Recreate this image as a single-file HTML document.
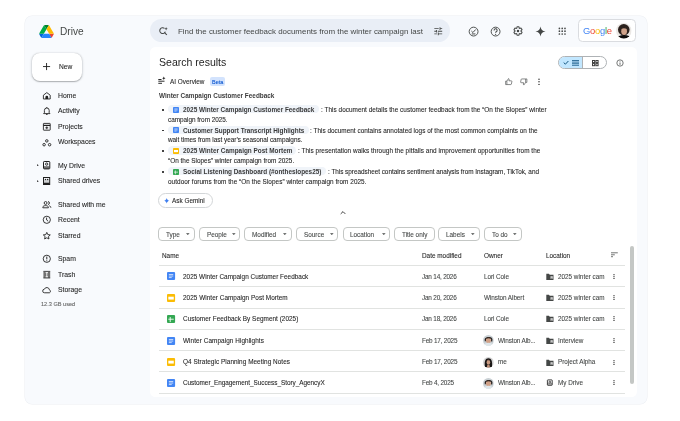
<!DOCTYPE html>
<html><head><meta charset="utf-8">
<style>
*{margin:0;padding:0;box-sizing:border-box}
html,body{-webkit-font-smoothing:antialiased;width:680px;height:421px;background:#fff;overflow:hidden;position:relative;font-family:"Liberation Sans",sans-serif;color:#1f1f1f}
.a{position:absolute}
.t{position:absolute;white-space:nowrap;will-change:transform;font-family:"Liberation Sans",sans-serif}
svg{position:absolute;overflow:visible}
#frame{left:25.2px;top:15.6px;width:622.2px;height:388.8px;background:#f8fafd;border-radius:7px;box-shadow:0 0 0 .5px #eceef2}
#search{left:149.7px;top:19.4px;width:300.3px;height:23px;background:#e9eef6;border-radius:12px}
#acct{left:577.5px;top:19.4px;width:58px;height:23px;background:#fff;border:.7px solid #dadce0;border-radius:4.5px}
#newbtn{left:32.3px;top:52.5px;width:50px;height:28px;background:#fff;border-radius:8px;box-shadow:0 .5px 1px rgba(60,64,67,.3),0 .5px 2px .5px rgba(60,64,67,.15)}
.nav{font-size:6.85px;color:#1f1f1f;line-height:10px;left:58.2px}
#card{left:149.6px;top:46.8px;width:487.6px;height:349.8px;background:#fff;border-radius:5.5px}
.body{font-size:6.4px;line-height:10px;color:#1f1f1f}
.chip{position:absolute;height:14px;top:227.1px;border:.7px solid #c4c7c5;border-radius:4px}
.ctext{font-size:6.4px;line-height:10px;color:#444746}
.div{position:absolute;left:158.5px;width:466.3px;height:.7px;background:#e1e3e1}
</style></head><body>
<div id="frame" class="a"></div>

<!-- Drive logo -->
<svg style="left:39px;top:24.7px" width="15" height="13" viewBox="0 0 87.3 78">
<path d="M6.6 66.85l3.85 6.65c.8 1.4 1.95 2.5 3.3 3.3l13.75-23.8H0c0 1.55.4 3.1 1.2 4.5z" fill="#0066da"/>
<path d="M43.65 25L29.9 1.2c-1.35.8-2.5 1.9-3.3 3.3L1.2 48.5A9.06 9.06 0 000 53h27.5z" fill="#00ac47"/>
<path d="M73.55 76.8c1.35-.8 2.5-1.9 3.3-3.3l1.6-2.75 7.65-13.25c.8-1.4 1.2-2.95 1.2-4.5H59.798l5.852 11.5z" fill="#ea4335"/>
<path d="M43.65 25L57.4 1.2C56.05.4 54.5 0 52.9 0H34.4c-1.6 0-3.15.45-4.5 1.2z" fill="#00832d"/>
<path d="M59.8 53H27.5L13.75 76.8c1.35.8 2.9 1.2 4.5 1.2h50.8c1.6 0 3.15-.45 4.5-1.2z" fill="#2684fc"/>
<path d="M73.4 26.5l-12.7-22c-.8-1.4-1.95-2.5-3.3-3.3L43.65 25 59.8 53h27.45c0-1.55-.4-3.1-1.2-4.5z" fill="#ffba00"/>
</svg>
<div class="t" style="left:59.6px;top:25.8px;font-size:10.1px;line-height:12px;color:#444746">Drive</div>

<!-- search -->
<div id="search" class="a"></div>
<svg style="left:157.5px;top:26px" width="10.5" height="10.5" viewBox="0 0 24 24"><path d="M14.8 5.6A6.6 6.6 0 1 0 16.8 13" fill="none" stroke="#444746" stroke-width="2.3"/><path d="M15 15l5.2 5.2" stroke="#444746" stroke-width="2.5"/><path d="M18.5 2.5l1.1 2.7 2.7 1.1-2.7 1.1-1.1 2.7-1.1-2.7-2.7-1.1 2.7-1.1z" fill="#444746"/></svg>
<div class="t" style="left:177.7px;top:26.5px;font-size:7.94px;line-height:10px;color:#444746">Find the customer feedback documents from the winter campaign last</div>
<svg style="left:433.2px;top:25.8px" width="10.5" height="10.5" viewBox="0 0 24 24"><path d="M3 17v2h6v-2H3zM3 5v2h10V5H3zm10 16v-2h8v-2h-8v-2h-2v6h2zM7 9v2H3v2h4v2h2V9H7zm14 4v-2H11v2h10zm-6-4h2V7h4V5h-4V3h-2v6z" fill="#444746"/></svg>

<!-- top right icons -->
<svg style="left:467.9px;top:25.5px" width="11.2" height="11.2" viewBox="0 0 24 24"><circle cx="12" cy="12" r="9.5" fill="none" stroke="#444746" stroke-width="2"/><path d="M7.3 10.8l3.2 3.2 6.2-6.6" fill="none" stroke="#444746" stroke-width="2.1"/><path d="M8 17h8" stroke="#444746" stroke-width="2.1"/></svg>
<svg style="left:490.1px;top:25.5px" width="11.2" height="11.2" viewBox="0 0 24 24"><circle cx="12" cy="12" r="9.5" fill="none" stroke="#444746" stroke-width="2"/><path d="M8.7 9.4a3.3 3.3 0 1 1 4.7 3c-1 .5-1.4 1.1-1.4 2.3" fill="none" stroke="#444746" stroke-width="2.2"/><circle cx="12" cy="17.8" r="1.35" fill="#444746"/></svg>
<svg style="left:512.8px;top:26.2px" width="10" height="10" viewBox="0 0 24 24"><path d="M19.4 13c.04-.33.06-.66.06-1s-.02-.67-.06-1l2.1-1.65c.2-.15.25-.42.12-.64l-2-3.46c-.12-.22-.39-.3-.61-.22l-2.49 1c-.52-.4-1.08-.73-1.69-.98l-.38-2.65A.49.49 0 0 0 14 2h-4c-.25 0-.46.18-.49.42l-.38 2.65c-.61.25-1.17.59-1.69.98l-2.49-1a.5.5 0 0 0-.61.22l-2 3.46c-.13.22-.07.49.12.64L4.57 11c-.04.33-.07.67-.07 1s.03.67.07 1l-2.11 1.65c-.19.15-.24.42-.12.64l2 3.46c.12.22.39.3.61.22l2.49-1c.52.4 1.08.73 1.69.98l.38 2.65c.03.24.24.42.49.42h4c.25 0 .46-.18.49-.42l.38-2.65c.61-.25 1.17-.59 1.69-.98l2.49 1c.23.09.49 0 .61-.22l2-3.46c.12-.22.07-.49-.12-.64L19.4 13z" fill="none" stroke="#444746" stroke-width="2.5"/><circle cx="12" cy="12" r="3" fill="#444746"/></svg>
<svg style="left:534.8px;top:25.6px" width="11" height="11" viewBox="0 0 24 24"><path d="M12 1C13 8 16 11 23 12C16 13 13 16 12 23C11 16 8 13 1 12C8 11 11 8 12 1z" fill="#444746"/></svg>
<svg style="left:558.1px;top:27px" width="8.4" height="8.4" viewBox="0 0 24 24" fill="#444746"><circle cx="4" cy="4" r="2.4"/><circle cx="12" cy="4" r="2.4"/><circle cx="20" cy="4" r="2.4"/><circle cx="4" cy="12" r="2.4"/><circle cx="12" cy="12" r="2.4"/><circle cx="20" cy="12" r="2.4"/><circle cx="4" cy="20" r="2.4"/><circle cx="12" cy="20" r="2.4"/><circle cx="20" cy="20" r="2.4"/></svg>

<div id="acct" class="a"></div>
<div class="t" style="left:582.6px;top:24.8px;font-size:9.4px;line-height:12px;letter-spacing:-.25px"><span style="color:#4285f4">G</span><span style="color:#ea4335">o</span><span style="color:#fbbc05">o</span><span style="color:#4285f4">g</span><span style="color:#34a853">l</span><span style="color:#ea4335">e</span></div>
<svg style="left:616.4px;top:23.2px" width="15.6" height="15.6" viewBox="0 0 20 20">
<defs><clipPath id="av"><circle cx="10" cy="10" r="10"/></clipPath></defs>
<g clip-path="url(#av)"><rect width="20" height="20" fill="#ebe8e5"/><ellipse cx="10" cy="8.6" rx="7.4" ry="7.4" fill="#2b211d"/><ellipse cx="10.4" cy="10.6" rx="3.7" ry="4.7" fill="#cfa28a"/><path d="M6.8 7.5C7.5 4.5 13 4.5 14 7.8 12 6.5 9 6.5 6.8 7.5z" fill="#2b211d"/><path d="M1 21c.5-3.5 4-5.5 9.3-5.5s8.8 2 9.3 5.5z" fill="#0c0a0a"/></g></svg>

<!-- New button -->
<div id="newbtn" class="a"></div>
<svg style="left:42.9px;top:62.6px" width="7.1" height="7.1" viewBox="0 0 10 10"><path d="M5 0v10M0 5h10" stroke="#1f1f1f" stroke-width="1.3"/></svg>
<div class="t" style="left:58.6px;top:62.1px;font-size:6.64px;line-height:10px;color:#1f1f1f;-webkit-text-stroke:.08px #1f1f1f">New</div>


<div class="t" style="left:58.2px;top:90.50px;font-size:6.85px;line-height:10px;color:#1f1f1f;;-webkit-text-stroke:0.08px #1f1f1f">Home</div>
<svg style="left:41.7px;top:90.7px" width="9.6" height="9.6" viewBox="0 0 24 24" ><path d="M3.5 10.5L12 4l8.5 6.5V20h-17z" fill="none" stroke="#1f1f1f" stroke-width="2.2" stroke-linejoin="round"/><path d="M8.5 20v-4.5a3.5 3.5 0 0 1 7 0V20z" fill="#1f1f1f"/></svg>
<div class="t" style="left:58.2px;top:106.00px;font-size:6.85px;line-height:10px;color:#1f1f1f;;-webkit-text-stroke:0.08px #1f1f1f">Activity</div>
<svg style="left:41.7px;top:106.2px" width="9.6" height="9.6" viewBox="0 0 24 24" ><path d="M6 17V11a6 6 0 0 1 12 0v6l2 2H4z" fill="none" stroke="#1f1f1f" stroke-width="2.2" stroke-linejoin="round"/><path d="M10 21h4" stroke="#1f1f1f" stroke-width="2.2"/><path d="M12 2.5v2.5" stroke="#1f1f1f" stroke-width="2"/></svg>
<div class="t" style="left:58.2px;top:121.50px;font-size:6.85px;line-height:10px;color:#1f1f1f;;-webkit-text-stroke:0.08px #1f1f1f">Projects</div>
<svg style="left:41.7px;top:121.7px" width="9.6" height="9.6" viewBox="0 0 24 24" ><rect x="3.5" y="3.5" width="17" height="17" rx="1" fill="none" stroke="#1f1f1f" stroke-width="2.2"/><path d="M3.5 8.5h17" stroke="#1f1f1f" stroke-width="3"/><path d="M12 11v7M8.5 14.5h7" stroke="#1f1f1f" stroke-width="2.2"/></svg>
<div class="t" style="left:58.2px;top:137.00px;font-size:6.85px;line-height:10px;color:#1f1f1f;;-webkit-text-stroke:0.08px #1f1f1f">Workspaces</div>
<svg style="left:41.5px;top:137.5px" width="10" height="9" viewBox="0 0 10 9" ><circle cx="4.8" cy="2.9" r="1.25" fill="none" stroke="#1f1f1f" stroke-width=".9"/><circle cx="2.1" cy="6.7" r="1.25" fill="none" stroke="#1f1f1f" stroke-width=".9"/><circle cx="7.6" cy="6.7" r="1.25" fill="none" stroke="#1f1f1f" stroke-width=".9"/></svg>
<div class="t" style="left:58.2px;top:160.80px;font-size:6.85px;line-height:10px;color:#1f1f1f;;-webkit-text-stroke:0.08px #1f1f1f">My Drive</div>
<svg style="left:42.9px;top:161.2px" width="7.3" height="8.4" viewBox="0 0 7.3 8.4" ><rect x="1" y="5.2" width="5.3" height="2.7" fill="#707070"/><rect x=".5" y=".5" width="6.3" height="7.4" rx=".7" fill="none" stroke="#1f1f1f" stroke-width="1"/><circle cx="3.65" cy="3.1" r="1.15" fill="none" stroke="#1f1f1f" stroke-width=".9"/></svg>
<div class="t" style="left:58.2px;top:176.20px;font-size:6.85px;line-height:10px;color:#1f1f1f;;-webkit-text-stroke:0.08px #1f1f1f">Shared drives</div>
<svg style="left:42.9px;top:177px" width="7.2" height="8" viewBox="0 0 7.2 8" ><rect x=".5" y=".5" width="6.2" height="7" fill="none" stroke="#1f1f1f" stroke-width="1"/><rect x=".5" y="5.6" width="6.2" height="1.9" fill="#1f1f1f"/><circle cx="2.5" cy="2.5" r=".75" fill="#1f1f1f"/><circle cx="4.7" cy="2.5" r=".75" fill="#1f1f1f"/><path d="M1 4h5.2" stroke="#555" stroke-width=".5"/></svg>
<div class="t" style="left:58.2px;top:199.60px;font-size:6.85px;line-height:10px;color:#1f1f1f;;-webkit-text-stroke:0.08px #1f1f1f">Shared with me</div>
<svg style="left:41.7px;top:199.8px" width="9.6" height="9.6" viewBox="0 0 24 24" ><circle cx="9" cy="7.5" r="3.6" fill="none" stroke="#1f1f1f" stroke-width="2.2"/><path d="M2 19.5v-1.5c0-2.5 3.5-4 7-4s7 1.5 7 4v1.5z" fill="none" stroke="#1f1f1f" stroke-width="2.2" stroke-linejoin="round"/><path d="M15 4a3.6 3.6 0 0 1 0 7.2M18 14.5c2.5.8 4 2 4 3.5v1.5" fill="none" stroke="#1f1f1f" stroke-width="2.2"/></svg>
<div class="t" style="left:58.2px;top:215.00px;font-size:6.85px;line-height:10px;color:#1f1f1f;;-webkit-text-stroke:0.08px #1f1f1f">Recent</div>
<svg style="left:41.7px;top:215.2px" width="9.6" height="9.6" viewBox="0 0 24 24" ><circle cx="12" cy="12" r="9" fill="none" stroke="#1f1f1f" stroke-width="2.2"/><path d="M11.5 6.5v6l4 3" fill="none" stroke="#1f1f1f" stroke-width="2.2"/></svg>
<div class="t" style="left:58.2px;top:230.80px;font-size:6.85px;line-height:10px;color:#1f1f1f;;-webkit-text-stroke:0.08px #1f1f1f">Starred</div>
<svg style="left:41.7px;top:231.0px" width="9.6" height="9.6" viewBox="0 0 24 24" ><path d="M12 3.5l2.6 5.6 6.1.7-4.5 4.1 1.2 6.1L12 17l-5.4 3 1.2-6.1-4.5-4.1 6.1-.7z" fill="none" stroke="#1f1f1f" stroke-width="2.2" stroke-linejoin="round"/></svg>
<div class="t" style="left:58.2px;top:254.10px;font-size:6.85px;line-height:10px;color:#1f1f1f;;-webkit-text-stroke:0.08px #1f1f1f">Spam</div>
<svg style="left:41.7px;top:254.3px" width="9.6" height="9.6" viewBox="0 0 24 24" ><circle cx="12" cy="12" r="9" fill="none" stroke="#1f1f1f" stroke-width="2.2"/><path d="M12 6.5v7" stroke="#1f1f1f" stroke-width="2.4"/><circle cx="12" cy="17" r="1.4" fill="#1f1f1f"/></svg>
<div class="t" style="left:58.2px;top:269.60px;font-size:6.85px;line-height:10px;color:#1f1f1f;;-webkit-text-stroke:0.08px #1f1f1f">Trash</div>
<svg style="left:41.7px;top:269.8px" width="9.6" height="9.6" viewBox="0 0 24 24" ><path d="M3.5 3h17v17.5H3.5z" fill="#707070"/><path d="M3.5 3.3h17" stroke="#1f1f1f" stroke-width="1.4"/><path d="M3.5 20h17" stroke="#2a2a2a" stroke-width="1.6"/><path d="M9 6.5h6M9 17h6M12 6.5v10.5" stroke="#fff" stroke-width="2.2"/></svg>
<div class="t" style="left:58.2px;top:284.90px;font-size:6.85px;line-height:10px;color:#1f1f1f;;-webkit-text-stroke:0.08px #1f1f1f">Storage</div>
<svg style="left:41.7px;top:285.1px" width="9.6" height="9.6" viewBox="0 0 24 24" ><path d="M6.5 19.5a4.5 4.5 0 0 1-.5-9 6.5 6.5 0 0 1 12.5 1.5 4 4 0 0 1 0 7.5z" fill="none" stroke="#1f1f1f" stroke-width="2.2" stroke-linejoin="round"/></svg>
<svg style="left:37.4px;top:163.9px" width="1.8" height="2.4" viewBox="0 0 2 2" ><path d="M0 0l2 1-2 1z" fill="#1f1f1f"/></svg>
<svg style="left:37.4px;top:179.70000000000002px" width="1.8" height="2.4" viewBox="0 0 2 2" ><path d="M0 0l2 1-2 1z" fill="#1f1f1f"/></svg>
<div class="t" style="left:40.8px;top:299.40px;font-size:5.6px;line-height:10px;color:#5e5e5e;;-webkit-text-stroke:0.08px #5e5e5e">12.3 GB used</div>
<div id="card" class="a"></div>
<div class="t" style="left:158.8px;top:54.80px;font-size:10.54px;line-height:14px;color:#1f1f1f;">Search results</div>
<div class="a" style="left:558.2px;top:55.6px;width:48.6px;height:13.8px;border:.8px solid #aeb2b5;border-radius:7px;overflow:hidden;background:#fff"><div class="a" style="left:0;top:0;width:24.3px;height:100%;background:#c2e7ff;border-right:.8px solid #aeb2b5"></div></div>
<svg style="left:562.5px;top:60px" width="6" height="5" viewBox="0 0 6 5" ><path d="M.7 2.6l1.7 1.6L5.4 1" fill="none" stroke="#0b4f7a" stroke-width=".95"/></svg>
<svg style="left:572px;top:60px" width="7" height="6" viewBox="0 0 7 6" ><path d="M0 .5h7M0 2.1h7M0 3.7h7M0 5.3h7" stroke="#1d5f8c" stroke-width=".85"/></svg>
<svg style="left:591.8px;top:59.7px" width="6.6" height="6.2" viewBox="0 0 6.6 6.2" ><rect x=".5" y=".5" width="2.2" height="2.1" fill="none" stroke="#3c3c3c" stroke-width="1"/><rect x="3.9" y=".5" width="2.2" height="2.1" fill="none" stroke="#3c3c3c" stroke-width="1"/><rect x=".5" y="3.6" width="2.2" height="2.1" fill="none" stroke="#3c3c3c" stroke-width="1"/><rect x="3.9" y="3.6" width="2.2" height="2.1" fill="none" stroke="#3c3c3c" stroke-width="1"/></svg>
<svg style="left:615.7px;top:58.8px" width="8" height="8" viewBox="0 0 24 24" ><circle cx="12" cy="12" r="9.5" fill="none" stroke="#444746" stroke-width="2.2"/><path d="M12 10.5v7" stroke="#444746" stroke-width="2.4"/><circle cx="12" cy="7" r="1.4" fill="#444746"/></svg>
<svg style="left:157px;top:76px" width="9" height="9" viewBox="0 0 9 9" ><path d="M1.3 3.5h3.2M1.3 5.2h6.2M1.3 7.3h3.7" stroke="#1f1f1f" stroke-width=".95"/><path d="M6.8 0.5l.55 1.15 1.15.55-1.15.55-.55 1.15-.55-1.15-1.15-.55 1.15-.55z" fill="#1f1f1f"/></svg>
<div class="t" style="left:169.9px;top:76.70px;font-size:6.4px;line-height:10px;color:#1f1f1f;;-webkit-text-stroke:0.08px #1f1f1f">AI Overview</div>
<div class="a" style="left:209.6px;top:77.2px;width:15.4px;height:8.4px;background:#d3e3fd;border-radius:2px"></div>
<div class="t" style="left:211.6px;top:76.80px;font-size:5.5px;line-height:10px;color:#0b57d0;-webkit-text-stroke:.1px #0b57d0">Beta</div>
<svg style="left:505px;top:77.8px" width="7.5" height="7.5" viewBox="0 0 24 24" ><path d="M2 10h4v11H2zM6 10l5-8c1.5 0 2.5 1 2.2 2.6L12.5 9H20a2 2 0 0 1 2 2.3l-1.6 8A2 2 0 0 1 18.4 21H6" fill="none" stroke="#444746" stroke-width="2" stroke-linejoin="round"/></svg>
<svg style="left:519.8px;top:77.8px" width="7.5" height="7.5" viewBox="0 0 24 24" ><g transform="rotate(180 12 12)"><path d="M2 10h4v11H2zM6 10l5-8c1.5 0 2.5 1 2.2 2.6L12.5 9H20a2 2 0 0 1 2 2.3l-1.6 8A2 2 0 0 1 18.4 21H6" fill="none" stroke="#444746" stroke-width="2" stroke-linejoin="round"/></g></svg>
<svg style="left:537.6px;top:78px" width="2" height="7" viewBox="0 0 2 7" ><circle cx="1" cy="1.2" r=".7" fill="#1f1f1f"/><circle cx="1" cy="3.8" r=".7" fill="#1f1f1f"/><circle cx="1" cy="6.4" r=".7" fill="#1f1f1f"/></svg>
<div class="t" style="left:158.8px;top:90.90px;font-size:6.4px;line-height:10px;color:#3c3c3c;font-weight:bold">Winter Campaign Customer Feedback</div>
<div class="a" style="left:162.4px;top:109.00px;width:1.6px;height:1.6px;border-radius:50%;background:#1f1f1f"></div>
<div class="a" style="left:168.2px;top:105.20px;width:150.7px;height:8.3px;background:#f0f4f9;border-radius:4.5px"></div>
<svg style="left:172.9px;top:106.5px" width="6" height="6" viewBox="0 0 24 24" ><rect x="0" y="0" width="24" height="24" rx="3" fill="#4285f4"/><path d="M5.5 7.5h13M5.5 12h13M5.5 16.5h8.5" stroke="#fff" stroke-width="2"/></svg>
<div class="t" style="left:182.6px;top:104.90px;font-size:6.4px;line-height:10px;color:#3a3a3a;font-weight:bold;letter-spacing:0.001px">2025 Winter Campaign Customer Feedback</div>
<div class="t" style="left:320.7px;top:105.10px;font-size:6.4px;line-height:10px;color:#1f1f1f;;-webkit-text-stroke:0.08px #1f1f1f;letter-spacing:0.039px">: This document details the customer feedback from the “On the Slopes” winter</div>
<div class="t" style="left:168.0px;top:114.80px;font-size:6.4px;line-height:10px;color:#1f1f1f;;-webkit-text-stroke:0.08px #1f1f1f;letter-spacing:-0.025px">campaign from 2025.</div>
<div class="a" style="left:162.4px;top:129.80px;width:1.6px;height:1.6px;border-radius:50%;background:#1f1f1f"></div>
<div class="a" style="left:168.2px;top:126.00px;width:140.4px;height:8.3px;background:#f0f4f9;border-radius:4.5px"></div>
<svg style="left:172.9px;top:127.3px" width="6" height="6" viewBox="0 0 24 24" ><rect x="0" y="0" width="24" height="24" rx="3" fill="#4285f4"/><path d="M5.5 7.5h13M5.5 12h13M5.5 16.5h8.5" stroke="#fff" stroke-width="2"/></svg>
<div class="t" style="left:182.6px;top:125.70px;font-size:6.4px;line-height:10px;color:#3a3a3a;font-weight:bold;letter-spacing:-0.013px">Customer Support Transcript Highlights</div>
<div class="t" style="left:310.40000000000003px;top:125.90px;font-size:6.4px;line-height:10px;color:#1f1f1f;;-webkit-text-stroke:0.08px #1f1f1f;letter-spacing:0.020px">: This document contains annotated logs of the most common complaints on the</div>
<div class="t" style="left:168.0px;top:135.30px;font-size:6.4px;line-height:10px;color:#1f1f1f;;-webkit-text-stroke:0.08px #1f1f1f;letter-spacing:-0.023px">wait times from last year’s seasonal campaigns.</div>
<div class="a" style="left:162.4px;top:150.10px;width:1.6px;height:1.6px;border-radius:50%;background:#1f1f1f"></div>
<div class="a" style="left:168.2px;top:146.30px;width:128.1px;height:8.3px;background:#f0f4f9;border-radius:4.5px"></div>
<svg style="left:172.9px;top:147.6px" width="6" height="6" viewBox="0 0 24 24" ><rect x="0" y="0" width="24" height="24" rx="3" fill="#fbbc04"/><rect x="4" y="8" width="16" height="8.5" fill="#fff"/></svg>
<div class="t" style="left:182.6px;top:146.00px;font-size:6.4px;line-height:10px;color:#3a3a3a;font-weight:bold;letter-spacing:0.014px">2025 Winter Campaign Post Mortem</div>
<div class="t" style="left:298.1px;top:146.20px;font-size:6.4px;line-height:10px;color:#1f1f1f;;-webkit-text-stroke:0.08px #1f1f1f;letter-spacing:0.040px">: This presentation walks through the pitfalls and improvement opportunities from the</div>
<div class="t" style="left:168.0px;top:155.90px;font-size:6.4px;line-height:10px;color:#1f1f1f;;-webkit-text-stroke:0.08px #1f1f1f;letter-spacing:0.020px">“On the Slopes” winter campaign from 2025.</div>
<div class="a" style="left:162.4px;top:171.00px;width:1.6px;height:1.6px;border-radius:50%;background:#1f1f1f"></div>
<div class="a" style="left:168.2px;top:167.20px;width:157.5px;height:8.3px;background:#f0f4f9;border-radius:4.5px"></div>
<svg style="left:172.9px;top:168.5px" width="6" height="6" viewBox="0 0 24 24" ><rect x="0" y="0" width="24" height="24" rx="3" fill="#34a853"/><path d="M9.5 6v15M4 12.5h16" stroke="#fff" stroke-width="2.6"/></svg>
<div class="t" style="left:182.6px;top:166.90px;font-size:6.4px;line-height:10px;color:#3a3a3a;font-weight:bold;letter-spacing:-0.002px">Social Listening Dashboard (#ontheslopes25)</div>
<div class="t" style="left:327.5px;top:167.10px;font-size:6.4px;line-height:10px;color:#1f1f1f;;-webkit-text-stroke:0.08px #1f1f1f;letter-spacing:-0.028px">: This spreadsheet contains sentiment analysis from Instagram, TikTok, and</div>
<div class="t" style="left:168.0px;top:176.90px;font-size:6.4px;line-height:10px;color:#1f1f1f;;-webkit-text-stroke:0.08px #1f1f1f;letter-spacing:0.048px">outdoor forums from the “On the Slopes” winter campaign from 2025.</div>
<div class="a" style="left:158.2px;top:193.2px;width:54.4px;height:14.4px;border:.7px solid #d3d6d8;border-radius:7.5px"></div>
<svg style="left:163.8px;top:197.6px" width="5.4" height="5.4" viewBox="0 0 10 10" ><path d="M5 0C5.4 2.6 7.4 4.6 10 5 7.4 5.4 5.4 7.4 5 10 4.6 7.4 2.6 5.4 0 5 2.6 4.6 4.6 2.6 5 0z" fill="#3f7ff0"/></svg>
<div class="t" style="left:172.4px;top:195.90px;font-size:6.4px;line-height:10px;color:#1f1f1f;;-webkit-text-stroke:0.08px #1f1f1f">Ask Gemini</div>
<svg style="left:339.5px;top:209.5px" width="6" height="5" viewBox="0 0 6 5" ><path d="M.7 3.9L3 1.6l2.3 2.3" fill="none" stroke="#1f1f1f" stroke-width=".85"/></svg>
<div class="chip" style="left:158.4px;width:36.8px"></div>
<div class="t" style="left:165.9px;top:229.50px;font-size:6.4px;line-height:10px;color:#444746;;-webkit-text-stroke:0.08px #444746">Type</div>
<svg style="left:186.29999999999998px;top:233.0px" width="3.6" height="2.1" viewBox="0 0 10 5" ><path d="M0 0h10L5 5z" fill="#444746"/></svg>
<div class="chip" style="left:199px;width:41.4px"></div>
<div class="t" style="left:206.5px;top:229.50px;font-size:6.4px;line-height:10px;color:#444746;;-webkit-text-stroke:0.08px #444746">People</div>
<svg style="left:231.5px;top:233.0px" width="3.6" height="2.1" viewBox="0 0 10 5" ><path d="M0 0h10L5 5z" fill="#444746"/></svg>
<div class="chip" style="left:244.4px;width:47.9px"></div>
<div class="t" style="left:251.9px;top:229.50px;font-size:6.4px;line-height:10px;color:#444746;;-webkit-text-stroke:0.08px #444746">Modified</div>
<svg style="left:283.40000000000003px;top:233.0px" width="3.6" height="2.1" viewBox="0 0 10 5" ><path d="M0 0h10L5 5z" fill="#444746"/></svg>
<div class="chip" style="left:296.2px;width:42.3px"></div>
<div class="t" style="left:303.7px;top:229.50px;font-size:6.4px;line-height:10px;color:#444746;;-webkit-text-stroke:0.08px #444746">Source</div>
<svg style="left:329.6px;top:233.0px" width="3.6" height="2.1" viewBox="0 0 10 5" ><path d="M0 0h10L5 5z" fill="#444746"/></svg>
<div class="chip" style="left:342.5px;width:47.9px"></div>
<div class="t" style="left:350.0px;top:229.50px;font-size:6.4px;line-height:10px;color:#444746;;-webkit-text-stroke:0.08px #444746">Location</div>
<svg style="left:381.5px;top:233.0px" width="3.6" height="2.1" viewBox="0 0 10 5" ><path d="M0 0h10L5 5z" fill="#444746"/></svg>
<div class="chip" style="left:394.3px;width:40.7px"></div>
<div class="t" style="left:401.8px;top:229.50px;font-size:6.4px;line-height:10px;color:#444746;;-webkit-text-stroke:0.08px #444746">Title only</div>
<div class="chip" style="left:438.4px;width:41.9px"></div>
<div class="t" style="left:445.9px;top:229.50px;font-size:6.4px;line-height:10px;color:#444746;;-webkit-text-stroke:0.08px #444746">Labels</div>
<svg style="left:471.40000000000003px;top:233.0px" width="3.6" height="2.1" viewBox="0 0 10 5" ><path d="M0 0h10L5 5z" fill="#444746"/></svg>
<div class="chip" style="left:484px;width:38.2px"></div>
<div class="t" style="left:491.5px;top:229.50px;font-size:6.4px;line-height:10px;color:#444746;;-webkit-text-stroke:0.08px #444746">To do</div>
<svg style="left:513.3000000000001px;top:233.0px" width="3.6" height="2.1" viewBox="0 0 10 5" ><path d="M0 0h10L5 5z" fill="#444746"/></svg>
<div class="t" style="left:162.1px;top:251.00px;font-size:6.4px;line-height:10px;color:#1f1f1f;;-webkit-text-stroke:0.08px #1f1f1f">Name</div>
<div class="t" style="left:421.8px;top:251.00px;font-size:6.4px;line-height:10px;color:#1f1f1f;;-webkit-text-stroke:0.08px #1f1f1f">Date modified</div>
<div class="t" style="left:483.5px;top:251.00px;font-size:6.4px;line-height:10px;color:#1f1f1f;;-webkit-text-stroke:0.08px #1f1f1f">Owner</div>
<div class="t" style="left:545.5px;top:251.00px;font-size:6.4px;line-height:10px;color:#1f1f1f;;-webkit-text-stroke:0.08px #1f1f1f">Location</div>
<svg style="left:610.8px;top:252.4px" width="7" height="6" viewBox="0 0 7 6" ><path d="M0 .8h6.8M0 2.8h3.8M0 4.7h2" stroke="#444746" stroke-width=".75"/></svg>
<div class="div" style="top:265.25px"></div>
<div class="div" style="top:286.45px"></div>
<div class="div" style="top:307.85px"></div>
<div class="div" style="top:329.05px"></div>
<div class="div" style="top:350.15px"></div>
<div class="div" style="top:371.25px"></div>
<div class="div" style="top:392.75px"></div>
<svg style="left:166.9px;top:272.4px" width="8.1" height="8.1" viewBox="0 0 24 24" ><rect x="0" y="0" width="24" height="24" rx="3" fill="#4285f4"/><path d="M5.5 7.5h13M5.5 12h13M5.5 16.5h8.5" stroke="#fff" stroke-width="2"/></svg>
<div class="t" style="left:183.2px;top:271.50px;font-size:6.4px;line-height:10px;color:#1f1f1f;;-webkit-text-stroke:0.08px #1f1f1f;letter-spacing:0.017px">2025 Winter Campaign Customer Feedback</div>
<div class="t" style="left:421.8px;top:271.50px;font-size:6.4px;line-height:10px;color:#444746;letter-spacing:-.2px;-webkit-text-stroke:0.08px #444746">Jan 14, 2026</div>
<div class="t" style="left:483.5px;top:271.50px;font-size:6.4px;line-height:10px;color:#444746;letter-spacing:-.08px;-webkit-text-stroke:0.08px #444746">Lori Cole</div>
<svg style="left:546px;top:272.9px" width="7.6" height="7.2" viewBox="0 0 7.6 7.2" ><path d="M.3 .8h2.6l.9 1h3.7v5.2H.3z" fill="#444746"/><rect x="4.6" y="3.2" width="2" height="2.6" fill="#fff"/><circle cx="5.6" cy="3.9" r=".45" fill="#444746"/><path d="M4.9 5.6c0-.6.3-.9.7-.9s.7.3.7.9z" fill="#444746"/></svg>
<div class="t" style="left:557.7px;top:271.50px;font-size:6.35px;line-height:10px;color:#444746;;-webkit-text-stroke:0.08px #444746">2025 winter cam</div>
<svg style="left:612.5px;top:273.9px" width="2" height="5.2" viewBox="0 0 2 5.2" ><circle cx="1" cy=".7" r=".62" fill="#1f1f1f"/><circle cx="1" cy="2.6" r=".62" fill="#1f1f1f"/><circle cx="1" cy="4.5" r=".62" fill="#1f1f1f"/></svg>
<svg style="left:166.9px;top:293.5px" width="8.1" height="8.1" viewBox="0 0 24 24" ><rect x="0" y="0" width="24" height="24" rx="3" fill="#fbbc04"/><rect x="4" y="8" width="16" height="8.5" fill="#fff"/></svg>
<div class="t" style="left:183.2px;top:292.60px;font-size:6.4px;line-height:10px;color:#1f1f1f;;-webkit-text-stroke:0.08px #1f1f1f;letter-spacing:0.043px">2025 Winter Campaign Post Mortem</div>
<div class="t" style="left:421.8px;top:292.60px;font-size:6.4px;line-height:10px;color:#444746;letter-spacing:-.2px;-webkit-text-stroke:0.08px #444746">Jan 20, 2026</div>
<div class="t" style="left:483.5px;top:292.60px;font-size:6.4px;line-height:10px;color:#444746;letter-spacing:-.08px;-webkit-text-stroke:0.08px #444746">Winston Albert</div>
<svg style="left:546px;top:294.0px" width="7.6" height="7.2" viewBox="0 0 7.6 7.2" ><path d="M.3 .8h2.6l.9 1h3.7v5.2H.3z" fill="#444746"/><rect x="4.6" y="3.2" width="2" height="2.6" fill="#fff"/><circle cx="5.6" cy="3.9" r=".45" fill="#444746"/><path d="M4.9 5.6c0-.6.3-.9.7-.9s.7.3.7.9z" fill="#444746"/></svg>
<div class="t" style="left:557.7px;top:292.60px;font-size:6.35px;line-height:10px;color:#444746;;-webkit-text-stroke:0.08px #444746">2025 winter cam</div>
<svg style="left:612.5px;top:295.0px" width="2" height="5.2" viewBox="0 0 2 5.2" ><circle cx="1" cy=".7" r=".62" fill="#1f1f1f"/><circle cx="1" cy="2.6" r=".62" fill="#1f1f1f"/><circle cx="1" cy="4.5" r=".62" fill="#1f1f1f"/></svg>
<svg style="left:166.9px;top:314.9px" width="8.1" height="8.1" viewBox="0 0 24 24" ><rect x="0" y="0" width="24" height="24" rx="3" fill="#34a853"/><path d="M9.5 6v15M4 12.5h16" stroke="#fff" stroke-width="2.6"/></svg>
<div class="t" style="left:183.2px;top:314.00px;font-size:6.4px;line-height:10px;color:#1f1f1f;;-webkit-text-stroke:0.08px #1f1f1f;letter-spacing:0.027px">Customer Feedback By Segment (2025)</div>
<div class="t" style="left:421.8px;top:314.00px;font-size:6.4px;line-height:10px;color:#444746;letter-spacing:-.2px;-webkit-text-stroke:0.08px #444746">Jan 18, 2026</div>
<div class="t" style="left:483.5px;top:314.00px;font-size:6.4px;line-height:10px;color:#444746;letter-spacing:-.08px;-webkit-text-stroke:0.08px #444746">Lori Cole</div>
<svg style="left:546px;top:315.4px" width="7.6" height="7.2" viewBox="0 0 7.6 7.2" ><path d="M.3 .8h2.6l.9 1h3.7v5.2H.3z" fill="#444746"/><rect x="4.6" y="3.2" width="2" height="2.6" fill="#fff"/><circle cx="5.6" cy="3.9" r=".45" fill="#444746"/><path d="M4.9 5.6c0-.6.3-.9.7-.9s.7.3.7.9z" fill="#444746"/></svg>
<div class="t" style="left:557.7px;top:314.00px;font-size:6.35px;line-height:10px;color:#444746;;-webkit-text-stroke:0.08px #444746">2025 winter cam</div>
<svg style="left:612.5px;top:316.4px" width="2" height="5.2" viewBox="0 0 2 5.2" ><circle cx="1" cy=".7" r=".62" fill="#1f1f1f"/><circle cx="1" cy="2.6" r=".62" fill="#1f1f1f"/><circle cx="1" cy="4.5" r=".62" fill="#1f1f1f"/></svg>
<svg style="left:166.9px;top:336.7px" width="8.1" height="8.1" viewBox="0 0 24 24" ><rect x="0" y="0" width="24" height="24" rx="3" fill="#4285f4"/><path d="M5.5 7.5h13M5.5 12h13M5.5 16.5h8.5" stroke="#fff" stroke-width="2"/></svg>
<div class="t" style="left:183.2px;top:335.80px;font-size:6.4px;line-height:10px;color:#1f1f1f;;-webkit-text-stroke:0.08px #1f1f1f;letter-spacing:0.067px">Winter Campaign Highlights</div>
<div class="t" style="left:421.8px;top:335.80px;font-size:6.4px;line-height:10px;color:#444746;letter-spacing:-.2px;-webkit-text-stroke:0.08px #444746">Feb 17, 2025</div>
<svg style="left:483.30px;top:335.40px" width="10.8" height="10.8" viewBox="0 0 20 20"><defs><clipPath id="c48873408"><circle cx="10" cy="10" r="10"/></clipPath></defs><g clip-path="url(#c48873408)"><rect width="20" height="20" fill="#c9d0d4"/><path d="M3 9C3 2.5 17.5 2 17.5 8.5l-.5 4-2-1V6.5H5.5V11l-2 1z" fill="#231c19"/><ellipse cx="10" cy="9.8" rx="4.6" ry="5.4" fill="#d0a086"/><path d="M5 6.8C6 3 14.5 3 15.5 7 13 5.5 8 5.5 5 6.8z" fill="#231c19"/><path d="M0 21c1-4 5-6.5 10-6.5s9 2.5 10 6.5z" fill="#dfe6ea"/></g></svg>
<div class="t" style="left:497.6px;top:335.80px;font-size:6.4px;line-height:10px;color:#444746;letter-spacing:-.12px;-webkit-text-stroke:0.08px #444746">Winston Alb...</div>
<svg style="left:546px;top:337.2px" width="7.6" height="7.2" viewBox="0 0 7.6 7.2" ><path d="M.3 .8h2.6l.9 1h3.7v5.2H.3z" fill="#444746"/><rect x="4.6" y="3.2" width="2" height="2.6" fill="#fff"/><circle cx="5.6" cy="3.9" r=".45" fill="#444746"/><path d="M4.9 5.6c0-.6.3-.9.7-.9s.7.3.7.9z" fill="#444746"/></svg>
<div class="t" style="left:557.7px;top:335.80px;font-size:6.35px;line-height:10px;color:#444746;;-webkit-text-stroke:0.08px #444746">Interview</div>
<svg style="left:612.5px;top:338.2px" width="2" height="5.2" viewBox="0 0 2 5.2" ><circle cx="1" cy=".7" r=".62" fill="#1f1f1f"/><circle cx="1" cy="2.6" r=".62" fill="#1f1f1f"/><circle cx="1" cy="4.5" r=".62" fill="#1f1f1f"/></svg>
<svg style="left:166.9px;top:358.0px" width="8.1" height="8.1" viewBox="0 0 24 24" ><rect x="0" y="0" width="24" height="24" rx="3" fill="#fbbc04"/><rect x="4" y="8" width="16" height="8.5" fill="#fff"/></svg>
<div class="t" style="left:183.2px;top:357.10px;font-size:6.4px;line-height:10px;color:#1f1f1f;;-webkit-text-stroke:0.08px #1f1f1f;letter-spacing:0.054px">Q4 Strategic Planning Meeting Notes</div>
<div class="t" style="left:421.8px;top:357.10px;font-size:6.4px;line-height:10px;color:#444746;letter-spacing:-.2px;-webkit-text-stroke:0.08px #444746">Feb 17, 2025</div>
<svg style="left:483.30px;top:356.70px" width="10.8" height="10.8" viewBox="0 0 20 20"><defs><clipPath id="c48873621"><circle cx="10" cy="10" r="10"/></clipPath></defs><g clip-path="url(#c48873621)"><rect width="20" height="20" fill="#d5d5d5"/><path d="M3.5 19C2 8 4.5 2.5 10 2.5S18 8 16.5 19z" fill="#1a1716"/><ellipse cx="10" cy="9.5" rx="3.3" ry="4.8" fill="#c99a80"/><path d="M6.5 7C7.5 4 12.5 4 13.5 7 12 6 8 6 6.5 7z" fill="#1a1716"/><path d="M7 20l1-5h4l1 5z" fill="#c08f77"/></g></svg>
<div class="t" style="left:497.6px;top:357.10px;font-size:6.4px;line-height:10px;color:#444746;letter-spacing:-.12px;-webkit-text-stroke:0.08px #444746">me</div>
<svg style="left:546px;top:358.5px" width="7.6" height="7.2" viewBox="0 0 7.6 7.2" ><path d="M.3 .8h2.6l.9 1h3.7v5.2H.3z" fill="#444746"/><rect x="4.6" y="3.2" width="2" height="2.6" fill="#fff"/><circle cx="5.6" cy="3.9" r=".45" fill="#444746"/><path d="M4.9 5.6c0-.6.3-.9.7-.9s.7.3.7.9z" fill="#444746"/></svg>
<div class="t" style="left:557.7px;top:357.10px;font-size:6.35px;line-height:10px;color:#444746;;-webkit-text-stroke:0.08px #444746">Project Alpha</div>
<svg style="left:612.5px;top:359.5px" width="2" height="5.2" viewBox="0 0 2 5.2" ><circle cx="1" cy=".7" r=".62" fill="#1f1f1f"/><circle cx="1" cy="2.6" r=".62" fill="#1f1f1f"/><circle cx="1" cy="4.5" r=".62" fill="#1f1f1f"/></svg>
<svg style="left:166.9px;top:378.9px" width="8.1" height="8.1" viewBox="0 0 24 24" ><rect x="0" y="0" width="24" height="24" rx="3" fill="#4285f4"/><path d="M5.5 7.5h13M5.5 12h13M5.5 16.5h8.5" stroke="#fff" stroke-width="2"/></svg>
<div class="t" style="left:183.2px;top:378.00px;font-size:6.4px;line-height:10px;color:#1f1f1f;;-webkit-text-stroke:0.08px #1f1f1f;letter-spacing:-0.028px">Customer_Engagement_Success_Story_AgencyX</div>
<div class="t" style="left:421.8px;top:378.00px;font-size:6.4px;line-height:10px;color:#444746;letter-spacing:-.2px;-webkit-text-stroke:0.08px #444746">Feb 4, 2025</div>
<svg style="left:483.30px;top:377.60px" width="10.8" height="10.8" viewBox="0 0 20 20"><defs><clipPath id="c48873830"><circle cx="10" cy="10" r="10"/></clipPath></defs><g clip-path="url(#c48873830)"><rect width="20" height="20" fill="#c9d0d4"/><path d="M3 9C3 2.5 17.5 2 17.5 8.5l-.5 4-2-1V6.5H5.5V11l-2 1z" fill="#231c19"/><ellipse cx="10" cy="9.8" rx="4.6" ry="5.4" fill="#d0a086"/><path d="M5 6.8C6 3 14.5 3 15.5 7 13 5.5 8 5.5 5 6.8z" fill="#231c19"/><path d="M0 21c1-4 5-6.5 10-6.5s9 2.5 10 6.5z" fill="#dfe6ea"/></g></svg>
<div class="t" style="left:497.6px;top:378.00px;font-size:6.4px;line-height:10px;color:#444746;letter-spacing:-.12px;-webkit-text-stroke:0.08px #444746">Winston Alb...</div>
<svg style="left:546px;top:379.4px" width="7.6" height="7.2" viewBox="0 0 24 24" ><rect x="4" y="3" width="16" height="18" rx="1.5" fill="none" stroke="#2a2a2a" stroke-width="3"/><circle cx="12" cy="10.5" r="3" fill="none" stroke="#2a2a2a" stroke-width="2.6"/><path d="M4 16.5h16" stroke="#2a2a2a" stroke-width="2.6"/></svg>
<div class="t" style="left:557.7px;top:378.00px;font-size:6.35px;line-height:10px;color:#444746;;-webkit-text-stroke:0.08px #444746">My Drive</div>
<svg style="left:612.5px;top:380.4px" width="2" height="5.2" viewBox="0 0 2 5.2" ><circle cx="1" cy=".7" r=".62" fill="#1f1f1f"/><circle cx="1" cy="2.6" r=".62" fill="#1f1f1f"/><circle cx="1" cy="4.5" r=".62" fill="#1f1f1f"/></svg>
<div class="a" style="left:630.2px;top:246.4px;width:3.8px;height:137.6px;background:#c4c7c5;border-radius:2px"></div>
</body></html>
